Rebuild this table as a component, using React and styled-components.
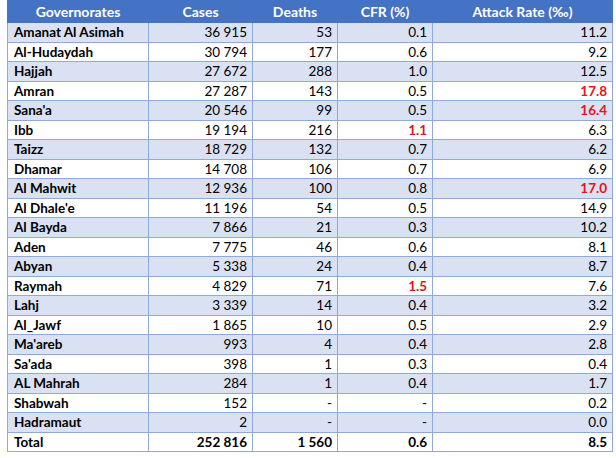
import React from 'react';
import styled, { createGlobalStyle } from 'styled-components';

const GlobalStyle = createGlobalStyle`
  html, body {
    margin: 0;
    padding: 0;
    background: #ffffff;
  }
  body {
    font-family: Lato, "Liberation Sans", sans-serif;
  }
`;

const Wrapper = styled.div`
  padding: 0 4px 0 7px;
`;

const Table = styled.table`
  border-collapse: collapse;
  table-layout: fixed;
  width: 605px;
  font-size: 13.5px;
  color: #000;
`;

const HeadCell = styled.th`
  background: #4472c4;
  color: #ffffff;
  font-weight: 700;
  font-size: 14px;
  text-align: center;
  height: 21px;
  padding: 0 6px;
  border: 1px solid #4472c4;
`;

const Row = styled.tr`
  background: ${(p) => (p.$shaded ? '#d9e1f2' : '#ffffff')};
  height: 19.5px;
`;

const NameCell = styled.td`
  font-weight: 700;
  text-align: left;
  padding: 0 6px;
  border: 1px solid #8ea9db;
  white-space: nowrap;
`;

const NumCell = styled.td`
  text-align: right;
  padding: 0 5px;
  border: 1px solid #8ea9db;
  white-space: nowrap;
  font-weight: ${(p) => (p.$bold || p.$alert ? 700 : 400)};
  color: ${(p) => (p.$alert ? '#e8141c' : '#000')};
`;

// name, cases, deaths, cfr, attack rate; flags mark red values
const rows = [
  ['Amanat Al Asimah', '36 915', '53', '0.1', '11.2'],
  ['Al-Hudaydah', '30 794', '177', '0.6', '9.2'],
  ['Hajjah', '27 672', '288', '1.0', '12.5'],
  ['Amran', '27 287', '143', '0.5', '17.8', { ar: true }],
  ["Sana'a", '20 546', '99', '0.5', '16.4', { ar: true }],
  ['Ibb', '19 194', '216', '1.1', '6.3', { cfr: true }],
  ['Taizz', '18 729', '132', '0.7', '6.2'],
  ['Dhamar', '14 708', '106', '0.7', '6.9'],
  ['Al Mahwit', '12 936', '100', '0.8', '17.0', { ar: true }],
  ["Al Dhale'e", '11 196', '54', '0.5', '14.9'],
  ['Al Bayda', '7 866', '21', '0.3', '10.2'],
  ['Aden', '7 775', '46', '0.6', '8.1'],
  ['Abyan', '5 338', '24', '0.4', '8.7'],
  ['Raymah', '4 829', '71', '1.5', '7.6', { cfr: true }],
  ['Lahj', '3 339', '14', '0.4', '3.2'],
  ['Al_Jawf', '1 865', '10', '0.5', '2.9'],
  ["Ma'areb", '993', '4', '0.4', '2.8'],
  ["Sa'ada", '398', '1', '0.3', '0.4'],
  ['AL Mahrah', '284', '1', '0.4', '1.7'],
  ['Shabwah', '152', '-', '-', '0.2'],
  ['Hadramaut', '2', '-', '-', '0.0'],
];

const App = () => {
  return (
    <Wrapper>
      <GlobalStyle />
      <Table>
        <colgroup>
          <col style={{ width: '141px' }} />
          <col style={{ width: '104px' }} />
          <col style={{ width: '85px' }} />
          <col style={{ width: '95px' }} />
          <col style={{ width: '180px' }} />
        </colgroup>
        <thead>
          <tr>
            <HeadCell>Governorates</HeadCell>
            <HeadCell>Cases</HeadCell>
            <HeadCell>Deaths</HeadCell>
            <HeadCell>CFR (%)</HeadCell>
            <HeadCell>Attack Rate (‰)</HeadCell>
          </tr>
        </thead>
        <tbody>
          {rows.map((r, i) => {
            const flags = r[5] || {};
            return (
              <Row key={r[0]} $shaded={i % 2 === 0}>
                <NameCell>{r[0]}</NameCell>
                <NumCell>{r[1]}</NumCell>
                <NumCell>{r[2]}</NumCell>
                <NumCell $alert={flags.cfr}>{r[3]}</NumCell>
                <NumCell $alert={flags.ar}>{r[4]}</NumCell>
              </Row>
            );
          })}
          <Row>
            <NameCell>Total</NameCell>
            <NumCell $bold>252 816</NumCell>
            <NumCell $bold>1 560</NumCell>
            <NumCell $bold>0.6</NumCell>
            <NumCell $bold>8.5</NumCell>
          </Row>
        </tbody>
      </Table>
    </Wrapper>
  );
};

export default App;
